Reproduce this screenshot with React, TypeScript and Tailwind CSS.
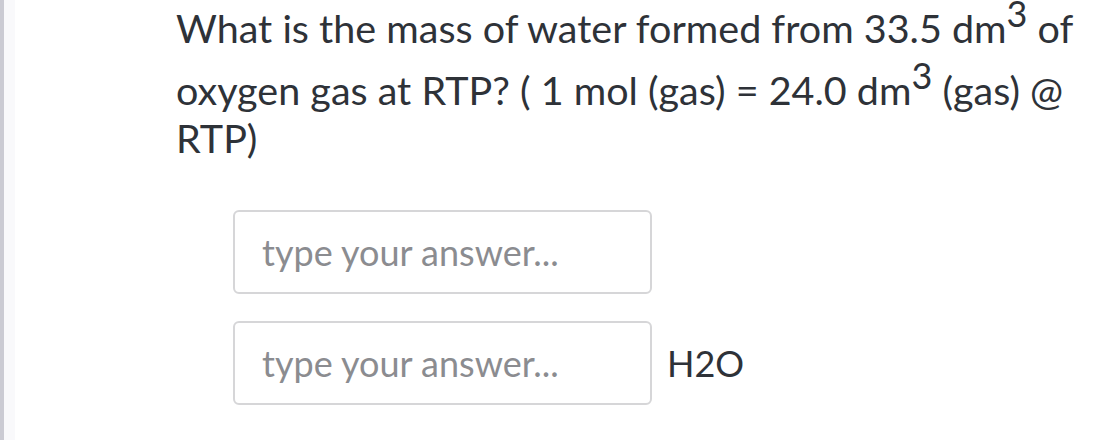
export default function App() {
  return (
    <div className="flex h-[440px] w-[1116px] overflow-hidden bg-white font-['Lato',sans-serif] text-[#2e3238]">
      <div className="w-[4px] shrink-0 bg-[#cbcbd3]" />
      <div className="w-[11px] shrink-0 bg-[#f9f9fb]" />
      <div className="flex-1 pl-[161px]">
        <p className="-mt-[10px] w-[905px] text-[39.5px] leading-[48px]">
          What is the mass of water formed from 33.5 dm
          <sup className="static align-[16px] text-[36px] leading-[46px]">3</sup> of oxygen gas at RTP? ( 1 mol (gas) = 24.0 dm
          <sup className="static align-[16px] text-[36px] leading-[46px]">3</sup> (gas) @ RTP)
        </p>
        <div className="mt-[48px] flex flex-col gap-[27px] pl-[57px]">
          <input
            className="h-[84px] w-[419px] rounded-[6px] border-2 border-[#d6d6d8] px-[27px] text-[36px] outline-none placeholder:text-[#8b8c90]"
            placeholder="type your answer..."
          />
          <div className="flex items-center gap-[15px]">
            <input
              className="h-[84px] w-[419px] rounded-[6px] border-2 border-[#d6d6d8] px-[27px] text-[36px] outline-none placeholder:text-[#8b8c90]"
              placeholder="type your answer..."
            />
            <span className="text-[36px]">H2O</span>
          </div>
        </div>
      </div>
    </div>
  );
}
